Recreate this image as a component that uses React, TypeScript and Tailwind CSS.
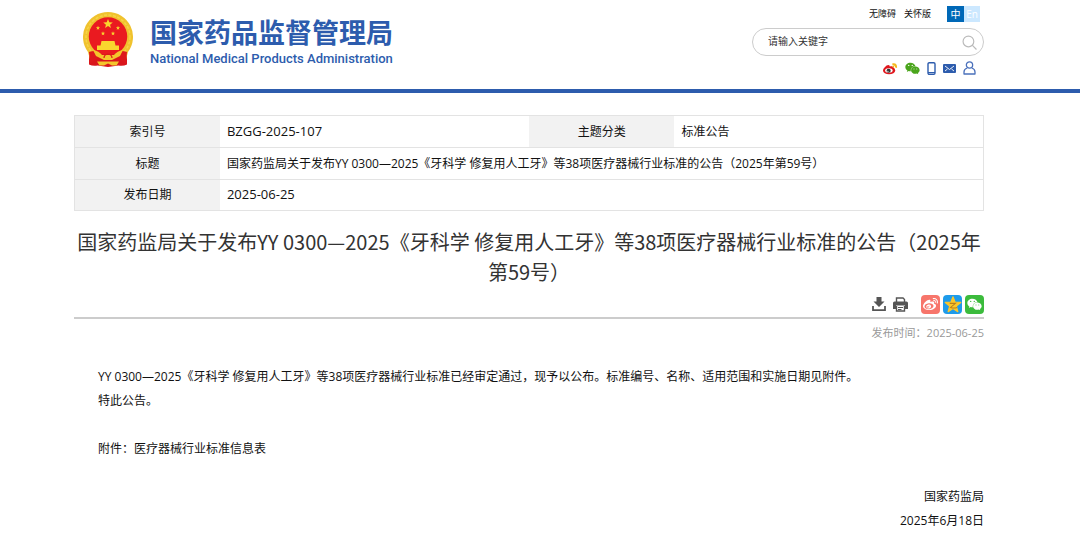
import { FaWeixin, FaWeibo } from "react-icons/fa";

const STAR = "M0,-10 L2.6,-3.4 L9.5,-3.1 L4.1,1.3 L5.9,8.1 L0,4.2 L-5.9,8.1 L-4.1,1.3 L-9.5,-3.1 L-2.6,-3.4 Z";

function Emblem() {
  return (
    <svg viewBox="0 0 100 110" className="h-[55px] w-[50px]" role="img" aria-label="国徽">
      <path d="M12 78 L12 105 Q20 109 29 107 L50 110 L71 107 Q80 109 88 105 L88 78 Z" fill="#d9161c" />
      <path d="M50 0 A50 50 0 0 1 90 80 L86 95 L66 90 H34 L14 95 L10 80 A50 50 0 0 1 50 0 Z" fill="#f0c22e" />
      <circle cx="50" cy="50" r="44" fill="none" stroke="#f7d347" strokeWidth="3" strokeDasharray="6 3" />
      <circle cx="50" cy="49" r="38.500" fill="#ea1a20" />
      <g fill="#f9d62e">
        <path d={STAR} transform="translate(50 24)" />
        <path d={STAR} transform="translate(30 32) scale(.44)" />
        <path d={STAR} transform="translate(70 32) scale(.44)" />
        <path d={STAR} transform="translate(40 43) scale(.44)" />
        <path d={STAR} transform="translate(60 43) scale(.44)" />
        <path d="M37 58 H63 L65 67 H72 V76 H28 V67 H35 Z" />
      </g>
      <path d="M12 80 Q28 74 37 84 H63 Q72 74 88 80 L86 104 L70 92 L50 100 L30 92 L14 104 Z" fill="#dd181c" />
      <path d="M20 76 Q32 78 38 86 H62 Q68 78 80 76 L74 88 L58 96 H42 L26 88 Z" fill="#f3c62c" />
      <path d="M28 99 H72 L67 107 H58 L50 103 L42 107 H33 Z" fill="#f3c62c" />
      <path d="M42 92 A8 8 0 0 1 58 92" fill="none" stroke="#dd181c" strokeWidth="2.500" />
    </svg>
  );
}

function WeiboMark() {
  return (
    <svg viewBox="0 0 32 26" className="h-[13px] w-[15px]" aria-hidden="true">
      <ellipse cx="13" cy="17" rx="13" ry="8.500" fill="#e0161d" />
      <path d="M2 13 Q8 4 13 6 Q15 7 14 9 Q21 6 23 12 Z" fill="#e0161d" />
      <ellipse cx="12.500" cy="17.500" rx="8" ry="4.800" fill="#fff" />
      <circle cx="12" cy="17.800" r="4.400" fill="#333" />
      <circle cx="10.500" cy="19" r="1.300" fill="#fff" />
      <path d="M20 2 Q31 0 30 12 L26 11 Q26 6 20 6 Z" fill="#f4b81f" />
      <circle cx="22" cy="9" r="2" fill="#f4b81f" />
    </svg>
  );
}

function PhoneMark() {
  return (
    <svg viewBox="0 0 18 26" className="h-[13px] w-[9px]" aria-hidden="true">
      <rect x="2" y="1.500" width="14" height="23" rx="2.500" fill="none" stroke="#2d5cad" strokeWidth="2.800" />
      <path d="M2 21 H16" stroke="#2d5cad" strokeWidth="2" />
    </svg>
  );
}

function MailMark() {
  return (
    <svg viewBox="0 0 26 18" className="h-[9px] w-[13px]" aria-hidden="true">
      <rect width="26" height="18" rx="2" fill="#2d5cad" />
      <path d="M4 4 L13 11 L22 4 M4 14 L9 10 M22 14 L17 10" fill="none" stroke="#fff" strokeWidth="1.800" />
    </svg>
  );
}

function UserMark() {
  return (
    <svg viewBox="0 0 26 28" className="h-[14px] w-[13px]" aria-hidden="true">
      <g fill="none" stroke="#4a70bb" strokeWidth="2.600">
        <circle cx="13" cy="8" r="6.300" />
        <path d="M8.500 14 Q2 16 2 22 V26 H24 V22 Q24 16 17.500 14" strokeLinejoin="round" />
      </g>
    </svg>
  );
}

function DownloadMark() {
  return (
    <svg viewBox="0 0 28 28" className="size-[14px]" aria-hidden="true">
      <path d="M9 0 H19 V9 H25 L14 20 L3 9 H9 Z" fill="#555" />
      <path d="M2 18 V26 H26 V18" fill="none" stroke="#555" strokeWidth="3.500" />
    </svg>
  );
}

function PrintMark() {
  return (
    <svg viewBox="0 0 30 30" className="size-[15px]" aria-hidden="true">
      <path d="M7 10 V2 H20 L23 5 V10" fill="none" stroke="#555" strokeWidth="2.800" />
      <path d="M3 9 H27 Q30 9 30 12 V24 H24 V17 H6 V24 H0 V12 Q0 9 3 9 Z" fill="#555" />
      <path d="M7 18 V28 H23 V18" fill="none" stroke="#555" strokeWidth="2.800" />
      <path d="M10 21 H20 M10 25 H17" stroke="#555" strokeWidth="2" />
    </svg>
  );
}

function QzoneMark() {
  return (
    <svg viewBox="-11 -11 22 22" className="size-[18px]" aria-hidden="true">
      <path d={STAR} fill="#fcc72b" stroke="#fcc72b" strokeWidth="1.500" strokeLinejoin="round" />
      <path d="M-4 -2 H3 L-3 3 Q1 4.500 5 3" fill="none" stroke="#b8801c" strokeWidth="1.300" />
    </svg>
  );
}

const label = "w-[16%] bg-[#f2f2f2] text-center font-normal";
const cell = "px-[7px]";
const share = "flex size-[19px] items-center justify-center rounded-sm";

export default function App() {
  return (
    <div className="min-h-screen bg-white font-['Open_Sans','Noto_Sans_CJK_SC',sans-serif] text-xs text-[#111]">
      <header className="border-b-4 border-[#2d5cad] pr-24 pl-[74px]">
        <div className="flex h-[89px] justify-between">
          <a href="#home" className="flex items-start gap-[17px] pt-3 pl-[9px] text-[#2d5cad]">
            <Emblem />
            <span className="flex flex-col pt-1">
              <span className="text-[27px] leading-[34px] font-bold">国家药品监督管理局</span>
              <span className="font-[Roboto,'Noto_Sans_CJK_SC',sans-serif] text-[13px] leading-[18px] font-medium">National Medical Products Administration</span>
            </span>
          </a>
          <div className="flex w-[232px] flex-col pt-1.5">
            <nav className="flex h-4 items-center justify-end gap-2 pr-1 text-[9px]">
              <a href="#access">无障碍</a>
              <a href="#care">关怀版</a>
              <span className="ml-2 flex text-[10px] leading-4 text-white">
                <a href="#zh" className="w-[17px] bg-[#0068b7] text-center">中</a>
                <a href="#en" className="w-4 bg-[#cce8ff] text-center">En</a>
              </span>
            </nav>
            <form className="mt-1.5 flex h-7 items-center rounded-full border border-[#ccc] pr-1.5 pl-[15px]">
              <input aria-label="搜索" placeholder="请输入关键字" className="min-w-0 flex-1 text-[10px] outline-none placeholder:text-[#333]" />
              <button type="button" aria-label="搜索">
                <svg viewBox="0 0 28 28" className="size-[15px]" fill="none" stroke="#bbb" strokeWidth="2.200">
                  <circle cx="12" cy="12" r="10" />
                  <path d="M19 19 L27 27" />
                </svg>
              </button>
            </form>
            <div className="mt-1 flex h-4 items-center justify-end gap-[7px] pr-2">
              <a href="#weibo" aria-label="微博"><WeiboMark /></a>
              <a href="#weixin" aria-label="微信"><FaWeixin className="size-[15px] text-[#4aa51c]" /></a>
              <a href="#mobile" aria-label="手机版"><PhoneMark /></a>
              <a href="#mail" aria-label="邮箱"><MailMark /></a>
              <a href="#user" aria-label="用户"><UserMark /></a>
            </div>
          </div>
        </div>
      </header>

      <main className="pt-[22px] pr-24 pl-[74px]">
        <table className="w-full table-fixed border-collapse border border-[#e3e3e3]">
          <tbody>
            <tr className="h-8 border-b border-[#e3e3e3]">
              <th scope="row" className={label}>索引号</th>
              <td className={`${cell} w-[34%] text-[13px]`}>BZGG-2025-107</td>
              <th scope="row" className={label}>主题分类</th>
              <td className={cell}>标准公告</td>
            </tr>
            <tr className="h-8 border-b border-[#e3e3e3]">
              <th scope="row" className={label}>标题</th>
              <td colSpan={3} className={cell}>国家药监局关于发布YY 0300—2025《牙科学 修复用人工牙》等38项医疗器械行业标准的公告（2025年第59号）</td>
            </tr>
            <tr className="h-[31px]">
              <th scope="row" className={label}>发布日期</th>
              <td colSpan={3} className={`${cell} text-[13px]`}>2025-06-25</td>
            </tr>
          </tbody>
        </table>

        <h1 className="mt-4 text-center font-['Noto_Sans_CJK_SC',sans-serif] text-xl leading-[30px] text-[#333]">
          国家药监局关于发布YY 0300—2025《牙科学 修复用人工牙》等38项医疗器械行业标准的公告（2025年第59号）
        </h1>

        <div className="mt-2 flex h-6 items-start justify-end gap-[3px] border-b-2 border-[#ccc]">
          <button type="button" aria-label="下载" className="mt-0.5 mr-1"><DownloadMark /></button>
          <button type="button" aria-label="打印" className="mt-0.5 mr-2.5"><PrintMark /></button>
          <a href="#share-weibo" aria-label="分享到微博" className={`${share} bg-[#f7756b] text-white`}><FaWeibo className="size-[15px]" /></a>
          <a href="#share-qzone" aria-label="分享到QQ空间" className={`${share} bg-[#1e9bea]`}><QzoneMark /></a>
          <a href="#share-weixin" aria-label="分享到微信" className={`${share} bg-[#3bbb3c] text-white`}><FaWeixin className="size-[15px]" /></a>
        </div>
        <p className="mt-1 text-right text-[11px] leading-5 text-[#999]">发布时间：2025-06-25</p>

        <article className="mt-[22px] leading-6">
          <div className="px-6">
            <p>YY 0300—2025《牙科学 修复用人工牙》等38项医疗器械行业标准已经审定通过，现予以公布。标准编号、名称、适用范围和实施日期见附件。</p>
            <p>特此公告。</p>
            <p className="mt-6">附件：<a href="#attachment">医疗器械行业标准信息表</a></p>
          </div>
          <div className="mt-6 text-right">
            <p>国家药监局</p>
            <p>2025年6月18日</p>
          </div>
        </article>
      </main>
    </div>
  );
}
